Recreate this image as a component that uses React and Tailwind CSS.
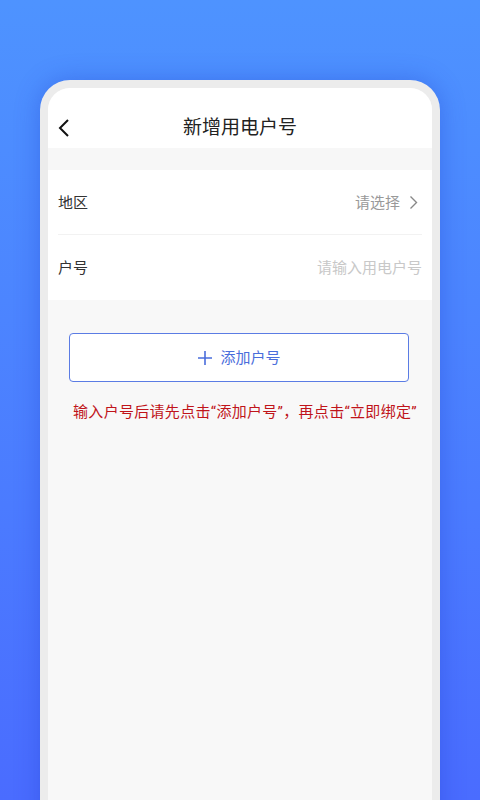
import React from 'react';

const font = { fontFamily: '"Noto Sans CJK SC", "Noto Sans", sans-serif' };
const quote = { fontFamily: 'Roboto, sans-serif' };

const App = () => {
  return (
    <div
      className="w-[480px] h-[800px] overflow-hidden bg-gradient-to-b from-[#4e93ff] to-[#4a6cff] pt-[80px] px-[40px]"
      style={font}
    >
      <div className="h-[760px] rounded-t-[30px] bg-[#ececec] pt-[8px] px-[8px] shadow-[0_0_24px_rgba(30,60,200,0.35)]">
        <div className="h-full rounded-t-[22px] overflow-hidden bg-[#f8f8f8] flex flex-col">
          {/* header */}
          <div className="h-[60px] bg-white flex items-center relative shrink-0">
            <svg className="absolute left-[9px] top-[30px]" width="14" height="20" viewBox="0 0 14 20">
              <path d="M11 2 L3 10 L11 18" fill="none" stroke="#111" strokeWidth="2" />
            </svg>
            <div className="w-full text-center text-[19px] text-[#222] pt-[17px]">新增用电户号</div>
          </div>
          <div className="h-[22px] shrink-0 bg-[#f7f7f7]" />

          {/* form */}
          <div className="bg-white px-[10px] shrink-0">
            <div className="h-[65px] flex items-center justify-between border-b border-[#f2f2f2]">
              <span className="text-[15px] text-[#333]">地区</span>
              <div className="flex items-center gap-[9px] pr-[4px]">
                <span className="text-[15px] text-[#999]">请选择</span>
                <svg width="9" height="15" viewBox="0 0 9 15">
                  <path d="M1.5 1.5 L7.5 7.5 L1.5 13.5" fill="none" stroke="#888" strokeWidth="1.4" />
                </svg>
              </div>
            </div>
            <div className="h-[65px] flex items-center justify-between">
              <span className="text-[15px] text-[#333]">户号</span>
              <span className="text-[15px] text-[#c8c8c8]">请输入用电户号</span>
            </div>
          </div>

          {/* add button */}
          <div className="pl-[21px] pr-[23px] pt-[33px]">
            <button className="w-full h-[49px] border border-[#5b7ce4] rounded-[4px] bg-white flex items-center justify-center gap-[7px] text-[#4a6ddb] text-[15px]">
              <svg width="16" height="16" viewBox="0 0 16 16">
                <path d="M8 1 V15 M1 8 H15" stroke="#4a6ddb" strokeWidth="1.6" />
              </svg>
              <span>添加户号</span>
            </button>
          </div>
          <div className="text-center text-[15px] tracking-[0.3px] text-[#c0141a] pt-[18px] pl-[10px]">
            输入户号后请先点击<span style={quote}>“</span>添加户号<span style={quote}>”</span>，再点击<span style={quote}>“</span>立即绑定<span style={quote}>”</span>
          </div>
        </div>
      </div>
    </div>
  );
};

export default App;
